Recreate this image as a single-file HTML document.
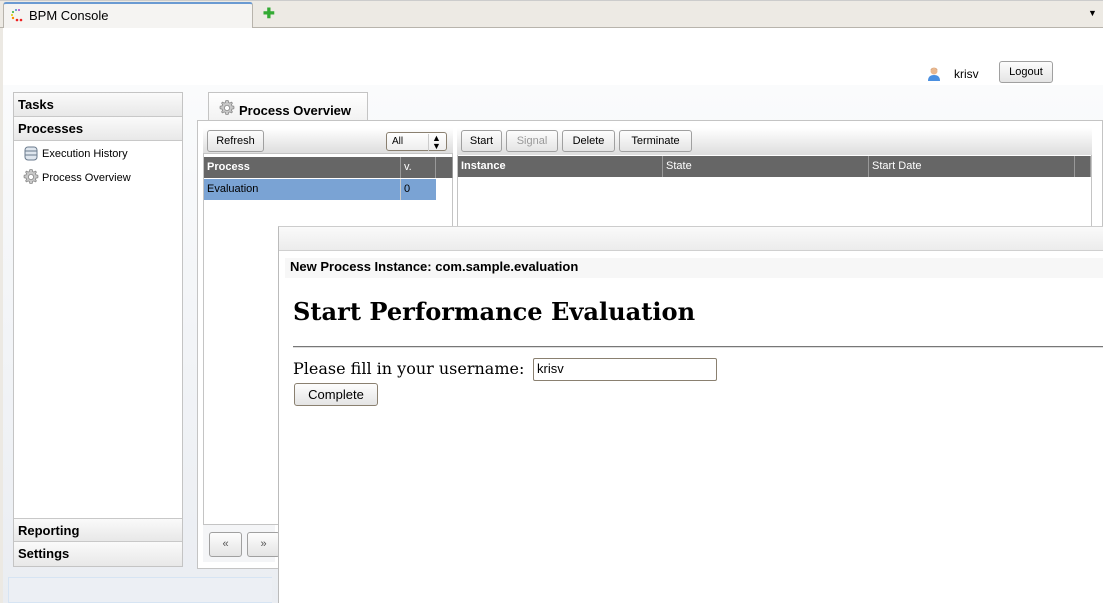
<!DOCTYPE html>
<html><head><meta charset="utf-8"><style>
*{box-sizing:border-box;margin:0;padding:0}
body{width:1103px;height:603px;overflow:hidden;position:relative;font-family:"Liberation Sans",sans-serif;background:#fff;font-size:11px;color:#000}
.a{position:absolute}
.btn{position:absolute;border:1px solid #a0a0a0;border-radius:3px;background:linear-gradient(#fdfdfd,#e4e4e4);font-size:11px;text-align:center;line-height:21px;color:#000}
.hd{position:absolute;left:0;width:168px;height:24px;background:linear-gradient(#fafafa,#e8e8e8);border-bottom:1px solid #c8c8c8;font-weight:bold;font-size:13px;line-height:23px;padding-left:4px}
.th{position:absolute;background:#666;color:#fff;height:21px;line-height:20px;font-size:11px;padding-left:3px;border-right:1px solid #999}
</style></head><body>
<svg width="0" height="0" style="position:absolute"><defs><g id="gear"><path d="M8 0.5l1.3 0.2 0.3 1.8 1.3 0.6 1.5-1 1 1-1 1.5 0.6 1.3 1.8 0.3 0.2 1.3-0.2 1.3-1.8 0.3-0.6 1.3 1 1.5-1 1-1.5-1-1.3 0.6-0.3 1.8-1.3 0.2-1.3-0.2-0.3-1.8-1.3-0.6-1.5 1-1-1 1-1.5-0.6-1.3-1.8-0.3-0.2-1.3 0.2-1.3 1.8-0.3 0.6-1.3-1-1.5 1-1 1.5 1 1.3-0.6 0.3-1.8z" fill="#c8c8c8" stroke="#888" stroke-width="0.8"/><circle cx="8" cy="8" r="2.6" fill="#fff" stroke="#888" stroke-width="0.8"/></g></defs></svg>
<!-- top tab bar -->
<div class="a" style="left:0;top:0;width:1103px;height:28px;background:#edeae4;border-top:1px solid #ccc;border-bottom:1px solid #b8b4ac"></div>
<div class="a" style="left:3px;top:2px;width:250px;height:26px;background:#f5f4f2;border:1px solid #b8b4ac;border-bottom:none;border-top:2px solid #6a9ad2;border-radius:3px 3px 0 0"></div>
<svg class="a" style="left:10px;top:8px" width="14" height="14"><circle cx="9" cy="2" r="1" fill="#a4c"/><circle cx="6" cy="2" r="1" fill="#48c"/><circle cx="3" cy="4" r="1" fill="#3a3"/><circle cx="2" cy="7" r="1" fill="#dc0"/><circle cx="3" cy="10" r="1.2" fill="#f80"/><circle cx="7" cy="12" r="1.3" fill="#e22"/><circle cx="11" cy="12" r="1.3" fill="#e22"/></svg>
<div class="a" style="left:29px;top:8px;font-size:13px">BPM Console</div>
<div class="a" style="left:263px;top:6px;color:#3a3;font-weight:bold;font-size:14px;line-height:14px">✚</div>
<div class="a" style="left:1088px;top:8px;font-size:9px">▼</div>
<div class="a" style="left:0;top:28px;width:3px;height:575px;background:#ece9e3"></div>
<!-- page bg -->
<div class="a" style="left:3px;top:85px;width:1100px;height:518px;background:linear-gradient(#fafbfc,#eaedf2)"></div>
<!-- user -->
<svg class="a" style="left:926px;top:66px" width="16" height="16"><circle cx="8" cy="5" r="3.5" fill="#e9b88f"/><path d="M4.5 4 Q8 0 11.5 4 L11 3 Q8 1 5 3Z" fill="#8a4a20"/><path d="M2 15 Q2 9 8 9 Q14 9 14 15Z" fill="#4a8fe0"/></svg>
<div class="a" style="left:954px;top:67px;font-size:12px">krisv</div>
<div class="btn" style="left:999px;top:61px;width:54px;height:22px;font-size:11px;line-height:20px">Logout</div>
<!-- left panel -->
<div class="a" style="left:13px;top:92px;width:170px;height:475px;border:1px solid #c4c4c4;background:#fff">
<div class="hd" style="top:0">Tasks</div>
<div class="hd" style="top:24px">Processes</div>
<div class="hd" style="top:425px;border-top:1px solid #c8c8c8">Reporting</div>
<div class="hd" style="top:449px;border-bottom:none">Settings</div>
</div>
<svg class="a" style="left:24px;top:146px" width="14" height="15"><rect x="1" y="1" width="12" height="13" rx="3" fill="#dfe6ee" stroke="#6a7a8c"/><path d="M1 5h12M1 9h12" stroke="#6a7a8c"/></svg>
<div class="a" style="left:42px;top:148px">Execution History</div>
<svg class="a" style="left:23px;top:169px" width="16" height="16"><use href="#gear"/></svg>
<div class="a" style="left:42px;top:172px">Process Overview</div>
<!-- tab -->
<div class="a" style="left:208px;top:92px;width:160px;height:28px;background:linear-gradient(#fff,#f2f2f2);border:1px solid #c4c4c4;border-bottom:none"></div>
<svg class="a" style="left:219px;top:100px" width="16" height="16"><use href="#gear"/></svg>
<div class="a" style="left:239px;top:103px;font-size:13px;font-weight:bold">Process Overview</div>
<!-- content panel -->
<div class="a" style="left:197px;top:120px;width:906px;height:449px;border:1px solid #c4c4c4;background:#fff"></div>
<div class="a" style="left:203px;top:128px;width:250px;height:25px;background:linear-gradient(#fff,#ddd)"></div>
<div class="btn" style="left:207px;top:130px;width:57px;height:22px">Refresh</div>
<div class="a" style="left:386px;top:132px;width:61px;height:19px;border:1px solid #8a8070;border-radius:3px;background:linear-gradient(#fff,#eee);font-size:10px;line-height:17px;padding-left:5px">All<span style="position:absolute;left:41px;top:0;height:17px;border-left:1px solid #ccc;padding-left:3px;font-size:9px;line-height:8px;top:1px">▲<br>▼</span></div>
<div class="a" style="left:203px;top:153px;width:250px;height:372px;border:1px solid #c4c4c4;background:#fff"></div>
<div class="th" style="left:204px;top:157px;width:197px;font-weight:bold">Process</div>
<div class="th" style="left:401px;top:157px;width:35px">v.</div>
<div class="th" style="left:436px;top:157px;width:17px"></div>
<div class="a" style="left:204px;top:179px;width:197px;height:21px;background:#7aa3d4;border-right:1px solid #ccc;font-size:11px;line-height:20px;padding-left:3px">Evaluation</div>
<div class="a" style="left:401px;top:179px;width:35px;height:21px;background:#7aa3d4;font-size:11px;line-height:20px;padding-left:3px">0</div>
<div class="a" style="left:203px;top:525px;width:72px;height:37px;background:#f4f5f7"></div>
<div class="btn" style="left:209px;top:532px;width:33px;height:25px;line-height:23px;color:#555">«</div>
<div class="btn" style="left:247px;top:532px;width:33px;height:25px;line-height:23px;color:#555">»</div>
<!-- right panel -->
<div class="a" style="left:457px;top:128px;width:635px;height:100px;border:1px solid #c4c4c4;border-top:none;background:#fff"></div>
<div class="a" style="left:457px;top:128px;width:635px;height:27px;background:linear-gradient(#fff,#ddd)"></div>
<div class="btn" style="left:461px;top:130px;width:41px;height:22px">Start</div>
<div class="btn" style="left:506px;top:130px;width:52px;height:22px;color:#999">Signal</div>
<div class="btn" style="left:562px;top:130px;width:53px;height:22px">Delete</div>
<div class="btn" style="left:619px;top:130px;width:73px;height:22px">Terminate</div>
<div class="th" style="left:458px;top:156px;width:205px;font-weight:bold">Instance</div>
<div class="th" style="left:663px;top:156px;width:206px">State</div>
<div class="th" style="left:869px;top:156px;width:206px">Start Date</div>
<div class="th" style="left:1075px;top:156px;width:16px"></div>
<!-- status bar -->
<div class="a" style="left:8px;top:577px;width:264px;height:26px;background:#eceff4;border:1px solid #d6e4f3;border-right:none"></div>
<!-- dialog -->
<div class="a" style="left:278px;top:226px;width:825px;height:377px;background:#fff;border-left:1px solid #bbb;border-top:1px solid #ccc"></div>
<div class="a" style="left:279px;top:227px;width:824px;height:24px;background:linear-gradient(#fafafa,#ececec);border-bottom:1px solid #d0d0d0"></div>
<div class="a" style="left:285px;top:258px;width:818px;height:20px;background:#f7f7f7;font-weight:bold;font-size:13px;line-height:17px;padding-left:5px">New Process Instance: com.sample.evaluation</div>
<div class="a" style="left:293px;top:297px;font-family:'DejaVu Serif','Liberation Serif',serif;font-weight:bold;font-size:24.1px">Start Performance Evaluation</div>
<div class="a" style="left:293px;top:346px;width:810px;height:2px;border-top:1px solid #777;border-bottom:1px solid #ddd"></div>
<div class="a" style="left:293px;top:359px;font-family:'DejaVu Serif','Liberation Serif',serif;font-size:16px">Please fill in your username:</div>
<div class="a" style="left:533px;top:358px;width:184px;height:23px;border:1px solid #8a8070;border-radius:2px;font-size:13px;line-height:20px;padding-left:3px">krisv</div>
<div class="btn" style="left:294px;top:383px;width:84px;height:23px;font-size:13px;line-height:21px;border-color:#8a8070">Complete</div>
</body></html>
